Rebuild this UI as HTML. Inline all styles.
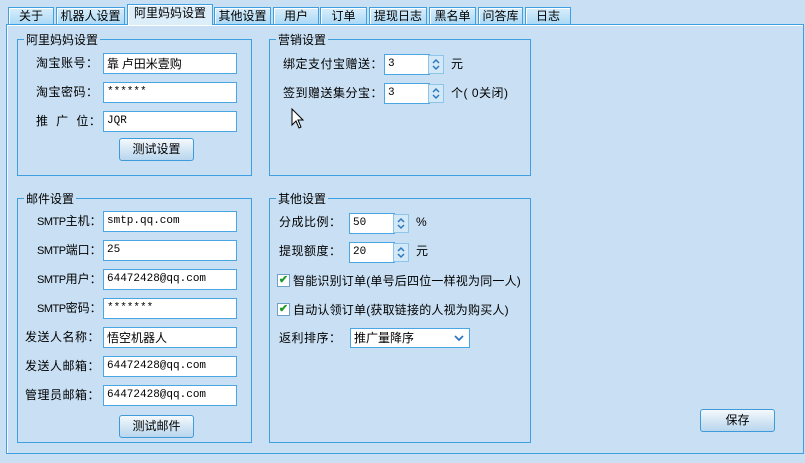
<!DOCTYPE html>
<html><head><meta charset="utf-8"><style>
*{box-sizing:border-box;margin:0;padding:0}
body{width:805px;height:463px;background:#c9dff3;position:relative;overflow:hidden;font-family:"Liberation Sans","Noto Sans CJK SC","WenQuanYi Zen Hei",sans-serif;font-size:12px;color:#000}
.a{position:absolute}
.tab{position:absolute;top:7px;height:18px;border:1px solid #3ea0e0;border-bottom:none;background:linear-gradient(#d8eefb,#a9d8f5);text-align:center;line-height:16px;font-size:12px;box-shadow:inset 1px 1px 0 #fff}
.tab.act{top:4px;height:21px;background:#dceefa;z-index:2}
.frame{position:absolute;left:6px;top:24px;width:798px;height:430px;border:1px solid #3ea0e0;box-shadow:inset 1px 1px 0 #fff}
.grp{position:absolute;border:1px solid #3ea0e0}
.lg{position:absolute;top:-9px;left:6px;background:#c9dff3;padding:0 2px;font-size:12px}
.lbl{position:absolute;font-size:12px;line-height:20px;letter-spacing:0.5px}
.sm{letter-spacing:0}
.sm b{font-weight:normal;font-family:"Liberation Sans Narrow","Liberation Sans",sans-serif;font-size:11px;letter-spacing:-0.5px}
.in{position:absolute;height:21px;background:#fff;border:1px solid #4aa6e2;font-family:"Liberation Mono","Noto Sans CJK SC",monospace;font-size:11px;line-height:19px;padding-left:3px}
.btn{position:absolute;width:75px;height:23px;border:1px solid #3e9ad8;border-radius:3px;background:linear-gradient(#f4f9fd,#cfe3f3 60%,#b9d6ee);text-align:center;line-height:21px;font-size:12px}
.sp{position:absolute;width:16px;height:19px;border:1px solid #8cc4ea;background:#d4e9f8}
.cb{position:absolute;width:13px;height:13px;border:1px solid #6fa0c8;background:#fff;color:#1c9a2a;font-size:11px;line-height:11px;text-align:center;font-weight:bold}
</style></head><body>
<div class="tab" style="left:8px;width:46px">关于</div>
<div class="tab" style="left:56px;width:69px">机器人设置</div>
<div class="tab act" style="left:127px;width:86px">阿里妈妈设置</div>
<div class="tab" style="left:214px;width:57px">其他设置</div>
<div class="tab" style="left:273px;width:46px">用户</div>
<div class="tab" style="left:320px;width:47px">订单</div>
<div class="tab" style="left:369px;width:58px">提现日志</div>
<div class="tab" style="left:429px;width:47px">黑名单</div>
<div class="tab" style="left:478px;width:45px">问答库</div>
<div class="tab" style="left:525px;width:46px">日志</div>
<div class="frame"></div>

<div class="grp" style="left:17px;top:39px;width:235px;height:137px"><span class="lg">阿里妈妈设置</span></div>
<div class="lbl" style="left:36px;top:53px">淘宝账号：</div>
<div class="lbl" style="left:36px;top:82px">淘宝密码：</div>
<div class="lbl" style="left:36px;top:111px">推&nbsp;&nbsp;广&nbsp;&nbsp;位：</div>
<div class="in" style="left:103px;top:53px;width:134px;font-family:'Noto Sans CJK SC',sans-serif;font-size:12px">靠 卢田米壹购</div>
<div class="in" style="left:103px;top:82px;width:134px">******</div>
<div class="in" style="left:103px;top:111px;width:134px">JQR</div>
<div class="btn" style="left:119px;top:138px">测试设置</div>

<div class="grp" style="left:269px;top:39px;width:262px;height:137px"><span class="lg">营销设置</span></div>
<div class="lbl" style="left:283px;top:54px">绑定支付宝赠送：</div>
<div class="lbl" style="left:283px;top:83px">签到赠送集分宝：</div>
<div class="in" style="left:384px;top:54px;width:46px">3</div><div class="sp" style="left:428px;top:55px"><svg width="14" height="17"><path d="M4 7 L7 4 L10 7 M4 10 L7 13 L10 10" fill="none" stroke="#2f78c0" stroke-width="1.5"/></svg></div>
<div class="lbl" style="left:451px;top:54px">元</div>
<div class="in" style="left:384px;top:83px;width:46px">3</div><div class="sp" style="left:428px;top:84px"><svg width="14" height="17"><path d="M4 7 L7 4 L10 7 M4 10 L7 13 L10 10" fill="none" stroke="#2f78c0" stroke-width="1.5"/></svg></div>
<div class="lbl" style="left:451px;top:83px">个( 0关闭)</div>
<svg class="a" style="left:291px;top:108px" width="14" height="22"><path d="M1 1 L1 17 L5 13 L8 20 L10 19 L7 12 L12 12 Z" fill="#fff" stroke="#000"/></svg>

<div class="grp" style="left:17px;top:198px;width:235px;height:245px"><span class="lg">邮件设置</span></div>
<div class="lbl sm" style="left:37px;top:211px"><b>SMTP</b>主机：</div>
<div class="lbl sm" style="left:37px;top:240px"><b>SMTP</b>端口：</div>
<div class="lbl sm" style="left:37px;top:269px"><b>SMTP</b>用户：</div>
<div class="lbl sm" style="left:37px;top:298px"><b>SMTP</b>密码：</div>
<div class="lbl" style="left:25px;top:327px">发送人名称：</div>
<div class="lbl" style="left:25px;top:356px">发送人邮箱：</div>
<div class="lbl" style="left:25px;top:385px">管理员邮箱：</div>
<div class="in" style="left:103px;top:211px;width:134px">smtp.qq.com</div>
<div class="in" style="left:103px;top:240px;width:134px">25</div>
<div class="in" style="left:103px;top:269px;width:134px">64472428@qq.com</div>
<div class="in" style="left:103px;top:298px;width:134px">*******</div>
<div class="in" style="left:103px;top:327px;width:134px;font-family:'Noto Sans CJK SC',sans-serif;font-size:12px">悟空机器人</div>
<div class="in" style="left:103px;top:356px;width:134px">64472428@qq.com</div>
<div class="in" style="left:103px;top:385px;width:134px">64472428@qq.com</div>
<div class="btn" style="left:119px;top:415px">测试邮件</div>

<div class="grp" style="left:269px;top:198px;width:262px;height:245px"><span class="lg">其他设置</span></div>
<div class="lbl" style="left:279px;top:212px">分成比例：</div>
<div class="in" style="left:349px;top:213px;width:46px">50</div><div class="sp" style="left:393px;top:214px"><svg width="14" height="17"><path d="M4 7 L7 4 L10 7 M4 10 L7 13 L10 10" fill="none" stroke="#2f78c0" stroke-width="1.5"/></svg></div>
<div class="lbl" style="left:416px;top:212px">%</div>
<div class="lbl" style="left:279px;top:241px">提现额度：</div>
<div class="in" style="left:349px;top:242px;width:46px">20</div><div class="sp" style="left:393px;top:243px"><svg width="14" height="17"><path d="M4 7 L7 4 L10 7 M4 10 L7 13 L10 10" fill="none" stroke="#2f78c0" stroke-width="1.5"/></svg></div>
<div class="lbl" style="left:416px;top:241px">元</div>
<div class="cb" style="left:277px;top:274px">✔</div><div class="lbl" style="left:293px;top:271px;letter-spacing:0.2px">智能识别订单(单号后四位一样视为同一人)</div>
<div class="cb" style="left:277px;top:303px">✔</div><div class="lbl" style="left:293px;top:300px;letter-spacing:0.2px">自动认领订单(获取链接的人视为购买人)</div>
<div class="lbl" style="left:279px;top:328px">返利排序：</div>
<div class="in" style="left:350px;top:328px;width:120px;height:20px;font-family:'Noto Sans CJK SC',sans-serif;font-size:12px;line-height:18px">推广量降序<svg style="position:absolute;right:5px;top:6px" width="10" height="6"><path d="M1 1 L5 5 L9 1" fill="none" stroke="#2f78c0" stroke-width="1.8"/></svg></div>

<div class="btn" style="left:700px;top:409px">保存</div>
</body></html>
